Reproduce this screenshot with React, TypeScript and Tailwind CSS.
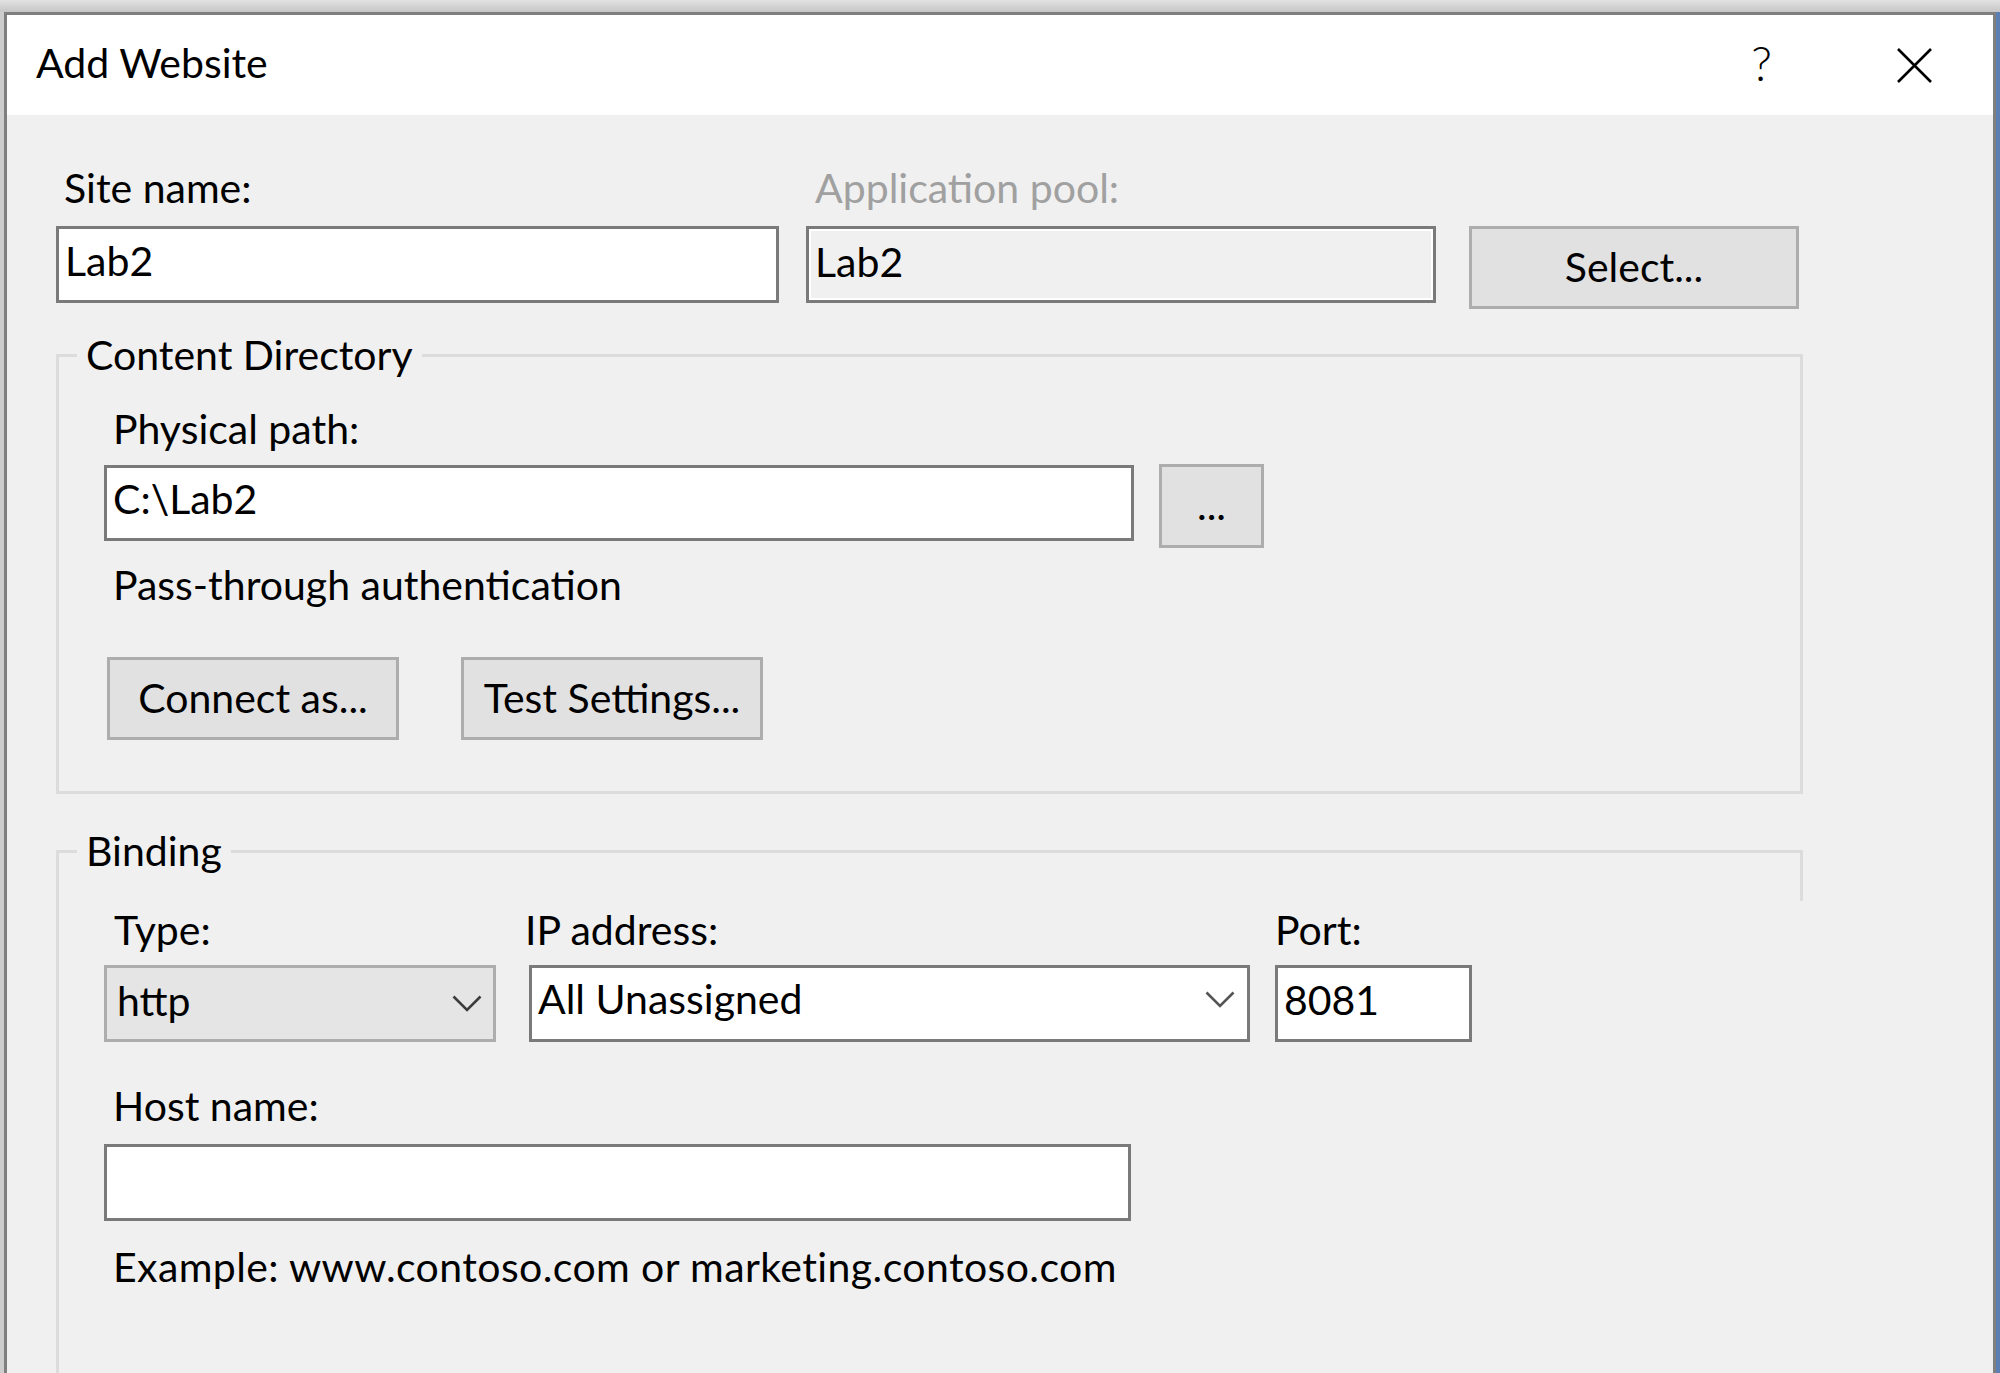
import React from 'react';

const box = 'border-[3px] border-[#7a7a7a] bg-white flex items-center pl-[6px] pb-[8px] whitespace-nowrap';
const btn = 'border-[3px] border-[#adadad] bg-[#e1e1e1] flex items-center justify-center pb-[2px] whitespace-nowrap';
const group = 'border-[3px] border-[#dcdcdc] min-w-0';

const Chevron = ({ color }: { color: string }) => (
  <svg width="30" height="17" viewBox="0 0 30 17" className="shrink-0">
    <polyline points="1.5,1.5 15,15 28.5,1.5" fill="none" stroke={color} strokeWidth="2.6" />
  </svg>
);

const App: React.FC = () => {
  return (
    <div className="w-[2000px] h-[1373px] overflow-hidden bg-[#d6d6d6] flex flex-col font-['Lato',sans-serif] text-[41px] leading-[52px] text-black">
      <div className="h-[12px] shrink-0 bg-gradient-to-b from-[#e2e2e2] to-[#c6c6c6]" />
      <div className="flex flex-1 min-h-0">
        <div className="w-[4px] shrink-0 bg-[#cdcdcd]" />
        <div className="w-[1992px] shrink-0 border-[3px] border-b-0 border-[#7f7f7f] bg-[#f0f0f0] flex flex-col">
          {/* title bar */}
          <div className="h-[100px] shrink-0 bg-white flex items-center">
            <div className="pl-[29px] pb-[5px] flex-1">Add Website</div>
            <div className="w-[153px] flex justify-center pb-[4px] text-[48px] font-light">?</div>
            <div className="w-[153px] mr-[2px] flex justify-center">
              <svg width="37" height="37" viewBox="0 0 37 37">
                <path d="M2 2 L35 35 M35 2 L2 35" stroke="#000" strokeWidth="2.6" fill="none" />
              </svg>
            </div>
          </div>

          {/* body */}
          <div className="flex flex-col pl-[49px] pt-[47px]">
            <div className="flex items-start">
              <div className="w-[723px] flex flex-col">
                <div className="h-[52px] pl-[8px]">Site name:</div>
                <div className={`${box} mt-[12px] h-[77px]`}>Lab2</div>
              </div>
              <div className="w-[630px] ml-[27px] flex flex-col">
                <div className="h-[52px] pl-[9px] text-[#a0a0a0]">Application pool:</div>
                <div className="mt-[12px] h-[77px] border-[3px] border-[#7a7a7a]">
                  <div className="h-full border-2 border-white bg-[#f0f0f0] flex items-center pl-[4px] pb-[6px]">Lab2</div>
                </div>
              </div>
              <button className={`${btn} ml-[33px] mt-[64px] w-[330px] h-[83px]`}>Select...</button>
            </div>

            {/* Content Directory */}
            <fieldset className={`${group} mt-[20px] w-[1747px]`}>
              <legend className="ml-[18px] px-[9px]">Content Directory</legend>
              <div className="pt-[22px] pb-[51px] pl-[45px]">
                <div className="h-[52px] pl-[9px]">Physical path:</div>
                <div className="flex items-start mt-[10px]">
                  <div className={`${box} w-[1030px] h-[76px]`}>C:\Lab2</div>
                  <button className={`${btn} ml-[25px] -mt-[1px] w-[105px] h-[84px]`}>...</button>
                </div>
                <div className="h-[52px] pl-[9px] mt-[11px]">Pass-through authentication</div>
                <div className="flex mt-[46px] ml-[3px]">
                  <button className={`${btn} w-[292px] h-[83px]`}>Connect as...</button>
                  <button className={`${btn} ml-[62px] w-[302px] h-[83px]`}>Test Settings...</button>
                </div>
              </div>
            </fieldset>

            {/* Binding */}
            <fieldset className={`${group} border-r-0 relative mt-[31px] w-[1747px]`}>
              <legend className="ml-[18px] px-[9px]">Binding</legend>
              <div className="absolute right-0 -top-[26px] w-[3px] h-[50px] bg-[#dcdcdc]" />
              <div className="pt-[27px] pb-[200px] pl-[45px]">
                <div className="flex items-start">
                  <div className="w-[392px] flex flex-col">
                    <div className="h-[52px] pl-[10px]">Type:</div>
                    <div className="mt-[9px] h-[77px] border-[3px] border-[#adadad] bg-[#e5e5e5] flex items-center justify-between pl-[10px] pr-[11px]">
                      <span className="pb-[6px]">http</span>
                      <Chevron color="#3c3c3c" />
                    </div>
                  </div>
                  <div className="w-[721px] ml-[33px] flex flex-col">
                    <div className="h-[52px] -ml-[4px]">IP address:</div>
                    <div className={`${box} mt-[9px] h-[77px] justify-between pr-[12px] pb-0`}>
                      <span className="pb-[2px]">All Unassigned</span>
                      <Chevron color="#555555" />
                    </div>
                  </div>
                  <div className="w-[197px] ml-[25px] flex flex-col">
                    <div className="h-[52px]">Port:</div>
                    <div className={`${box} mt-[9px] h-[77px]`}>8081</div>
                  </div>
                </div>
                <div className="h-[52px] pl-[9px] mt-[38px]">Host name:</div>
                <div className={`${box} mt-[12px] w-[1027px] h-[77px]`} />
                <div className="h-[52px] pl-[9px] mt-[20px] tracking-[0.4px]">Example: www.contoso.com or marketing.contoso.com</div>
              </div>
            </fieldset>
          </div>
        </div>
        <div className="w-[4px] shrink-0 bg-[#5b7fb3]" />
      </div>
    </div>
  );
};

export default App;
